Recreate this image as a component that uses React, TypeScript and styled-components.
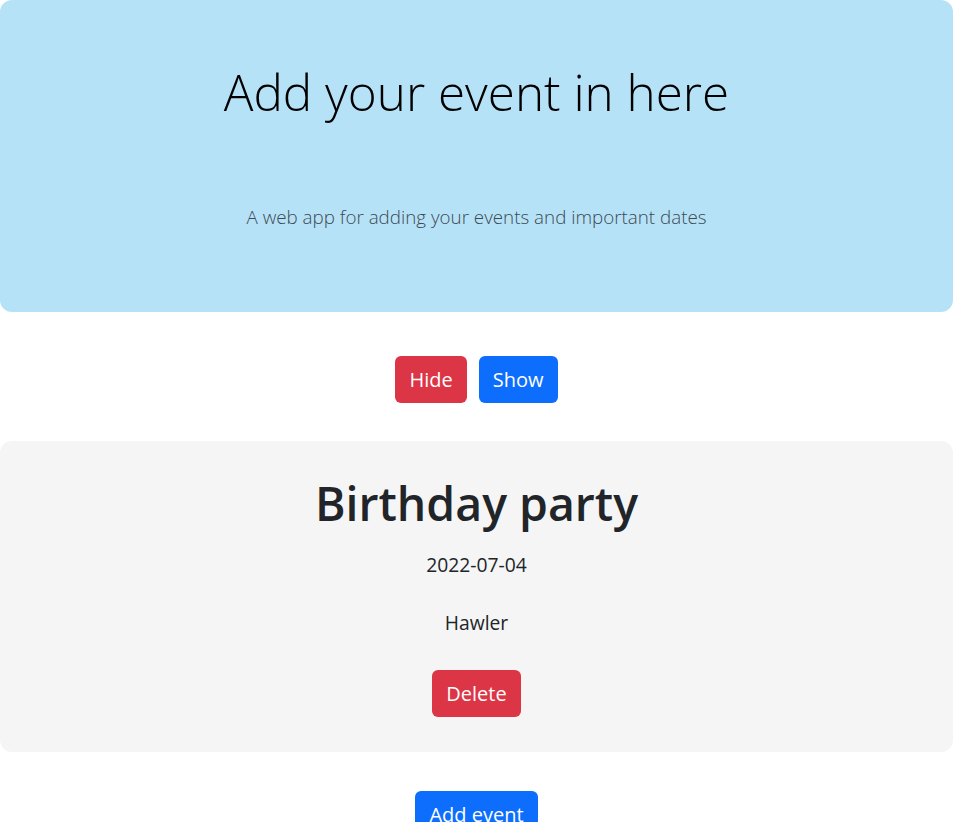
import React from "react";
import styled, { createGlobalStyle } from "styled-components";

const Global = createGlobalStyle`
  html, body { margin: 0; padding: 0; background: #fff; }
  body { font-family: "Open Sans", "Noto Sans", sans-serif; color: #212529; }
  * { box-sizing: border-box; }
`;

const Page = styled.div`
  width: 953px;
  display: flex;
  flex-direction: column;
  align-items: stretch;
`;

const Hero = styled.header`
  height: 312px;
  background: #b6e2f8;
  border-radius: 12px;
  display: flex;
  flex-direction: column;
  align-items: center;
  padding-top: 62px;
`;

const HeroTitle = styled.h1`
  margin: 0;
  font-size: 49.4px;
  font-weight: 300;
  line-height: 1.2;
  color: #000;
`;

const Lead = styled.p`
  margin: 83px 0 0;
  font-size: 18.8px;
  font-weight: 300;
  color: #3d4a53;
`;

const ButtonRow = styled.div`
  display: flex;
  justify-content: center;
  gap: 12px;
  margin: 44px 0 38px;
`;

const Button = styled.button<{ $variant: "danger" | "primary" }>`
  font-family: inherit;
  font-size: 20px;
  line-height: 31px;
  padding: 8px 14px;
  border: none;
  border-radius: 6px;
  color: #fff;
  background: ${(p) => (p.$variant === "danger" ? "#dc3545" : "#0d6efd")};
  cursor: pointer;
`;

const Card = styled.section`
  height: 311px;
  background: #f5f5f5;
  border-radius: 12px;
  display: flex;
  flex-direction: column;
  align-items: center;
  padding-top: 35px;
`;

const EventTitle = styled.h2`
  margin: 0;
  font-size: 46.4px;
  font-weight: 600;
  line-height: 1.2;
  color: #212529;
`;

const Info = styled.p`
  margin: 19px 0 0;
  font-size: 19.3px;
  line-height: 1.5;
`;

const Place = styled(Info)`
  margin-top: 29px;
`;

const CardAction = styled.div`
  margin-top: 32px;
`;

const Footer = styled.div`
  display: flex;
  justify-content: center;
  margin-top: 39px;
`;

export default function App() {
  return (
    <>
      <Global />
      <Page>
        <Hero>
          <HeroTitle>Add your event in here</HeroTitle>
          <Lead>A web app for adding your events and important dates</Lead>
        </Hero>
        <ButtonRow>
          <Button $variant="danger">Hide</Button>
          <Button $variant="primary">Show</Button>
        </ButtonRow>
        <Card>
          <EventTitle>Birthday party</EventTitle>
          <Info>2022-07-04</Info>
          <Place>Hawler</Place>
          <CardAction>
            <Button $variant="danger">Delete</Button>
          </CardAction>
        </Card>
        <Footer>
          <Button $variant="primary">Add event</Button>
        </Footer>
      </Page>
    </>
  );
}
